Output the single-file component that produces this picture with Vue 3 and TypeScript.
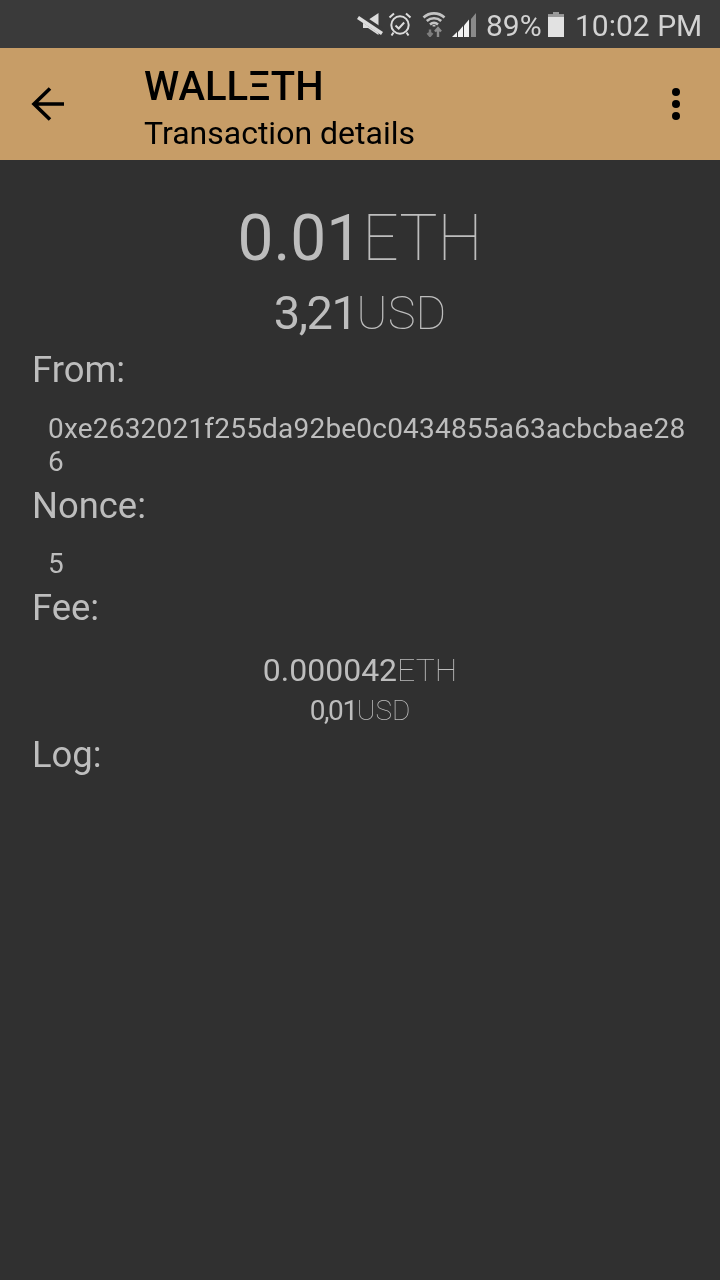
<script setup lang="ts">
const address = '0xe2632021f255da92be0c0434855a63acbcbae286'
</script>

<template>
  <div class="screen">
    <div class="status-bar">
      <svg class="ic" width="26" height="26" viewBox="0 0 26 26">
        <path d="M21.500 2v22L11 17H6V9h5z" fill="#dcdcdc" />
        <path d="M1 4.500l24 16" stroke="#3a3a3a" stroke-width="6.500" />
        <path d="M1 6.500l24 16" stroke="#dcdcdc" stroke-width="3.600" />
      </svg>
      <svg class="ic alarm" width="24" height="26" viewBox="0 0 24 26" fill="none" stroke="#dcdcdc">
        <circle cx="12" cy="14" r="8.700" stroke-width="2" />
        <path d="M7.500 14.500l3.200 3 5.500-6M1.500 6.500L6 2.500M22.500 6.500L18 2.500M5.500 21.500l-2 3M18.500 21.500l2 3" stroke-width="2" />
      </svg>
      <svg class="ic wifi" width="24" height="26" viewBox="0 0 24 26" fill="none" stroke="#c4c4c4">
        <path d="M1.500 6.500c6-5.500 15-5.500 21 0M4.800 10c4-3.600 10.400-3.600 14.400 0M8 13.500c2.400-2 5.600-2 8 0" stroke-width="2.600" />
        <path d="M12 14v1.500" stroke-width="2.800" />
        <path d="M8 25v-6M5.500 21.500L8 18.500l2.500 3" stroke="#7d7d7d" stroke-width="2.400" transform="rotate(180 8 21.700)" />
        <path d="M16 26v-8M13 20.500l3-3.500 3 3.500" stroke="#8d8d8d" stroke-width="2.400" />
      </svg>
      <svg class="ic signal" width="24" height="26" viewBox="0 0 24 26">
        <path d="M0 26h5v-5z" fill="#f2f2f2" />
        <path d="M6 26h5V15l-5 6z" fill="#f2f2f2" />
        <path d="M12 26h5V8.500l-5 6z" fill="#f2f2f2" />
        <path d="M19 26h5V2l-5 6z" fill="#8a8a8a" />
      </svg>
      <span class="pct">89%</span>
      <svg class="ic batt" width="16" height="25" viewBox="0 0 16 25">
        <path d="M5 0h6v2.500h5V25H0V2.500h5z" fill="#e2e2e2" />
        <path d="M5 0h6v2.500h5V5H0V2.500h5z" fill="#9a9a9a" />
      </svg>
      <span class="clock">10:02 PM</span>
    </div>

    <div class="app-bar">
      <button class="nav-btn" aria-label="Back">
        <svg width="36" height="36" viewBox="0 0 36 36" fill="none" stroke="#000" stroke-width="3.600">
          <path d="M35 18H5M21 2.500L5 18l16 15.500" />
        </svg>
      </button>
      <div class="titles">
        <div class="logo">WALLΞTH</div>
        <div class="subtitle">Transaction details</div>
      </div>
      <button class="menu-btn" aria-label="More">
        <span class="dot"></span><span class="dot"></span><span class="dot"></span>
      </button>
    </div>

    <div class="content">
      <div class="amount big">
        <span class="value">0.01</span><span class="unit">ETH</span>
      </div>
      <div class="amount big-sub">
        <span class="value">3,21</span><span class="unit">USD</span>
      </div>

      <div class="label from">From:</div>
      <div class="field address">{{ address }}</div>

      <div class="label">Nonce:</div>
      <div class="field">5</div>

      <div class="label">Fee:</div>
      <div class="amount small">
        <span class="value">0.000042</span><span class="unit">ETH</span>
      </div>
      <div class="amount small-sub">
        <span class="value">0,01</span><span class="unit">USD</span>
      </div>

      <div class="label log">Log:</div>
    </div>
  </div>
</template>

<style>
html, body { margin: 0; padding: 0; background: #303030; }
</style>

<style scoped>
.screen {
  width: 720px;
  height: 1280px;
  display: flex;
  flex-direction: column;
  background: #303030;
  font-family: Roboto, "Liberation Sans", sans-serif;
  overflow: hidden;
}

.status-bar {
  height: 48px;
  flex-shrink: 0;
  display: flex;
  align-items: center;
  justify-content: flex-end;
  padding-right: 18px;
  background: #3a3a3a;
  color: #d2d2d2;
  font-size: 30px;
}

.ic { flex-shrink: 0; }
.alarm { margin-left: 5px; }
.wifi { margin-left: 10px; }
.signal { margin-left: 6px; }
.pct { margin-left: 10px; will-change: transform; padding-top: 2px; }
.batt { margin-left: 6px; }
.clock { margin-left: 11px; will-change: transform; padding-top: 2px; }

.app-bar {
  height: 112px;
  flex-shrink: 0;
  display: flex;
  align-items: center;
  background: #c79d67;
  color: #000;
}

.nav-btn, .menu-btn {
  background: none;
  border: none;
  padding: 0;
  display: flex;
}

.nav-btn { margin-left: 29px; }

.titles {
  margin-left: 79px;
  flex: 1;
  will-change: transform;
}

.logo {
  font-size: 40px;
  font-weight: 500;
  line-height: 44px;
  margin-top: 14px;
}

.subtitle {
  font-size: 32px;
  line-height: 48px;
}

.menu-btn {
  flex-direction: column;
  gap: 4px;
  margin-right: 40px;
}

.dot {
  width: 8px;
  height: 8px;
  border-radius: 50%;
  background: #000;
}

.content {
  flex: 1;
  padding: 0 32px;
  color: #bdbdbd;
  will-change: transform;
}

.amount {
  text-align: center;
  white-space: nowrap;
}

.unit { font-weight: 100; }

.big { font-size: 64px; line-height: 75px; margin-top: 41px; }
.big-sub { font-size: 47px; line-height: 55px; margin-top: 9px; }
.big-sub .value { letter-spacing: -1.500px; }
.small { font-size: 32px; line-height: 38px; margin-top: 22px; }
.small-sub { font-size: 28px; line-height: 32px; margin-top: 6px; }
.small-sub .value { letter-spacing: -1.400px; }

.label {
  font-size: 36.400px;
  line-height: 42px;
  margin-top: 7px;
}

.from { margin-top: 9px; }
.log { margin-top: 7px; }

.field {
  font-size: 28px;
  line-height: 33px;
  letter-spacing: 0.2px;
  padding-left: 16px;
  margin-top: 20px;
}

.address {
  margin-top: 21px;
  word-break: break-all;
  width: 642px;
}
</style>
